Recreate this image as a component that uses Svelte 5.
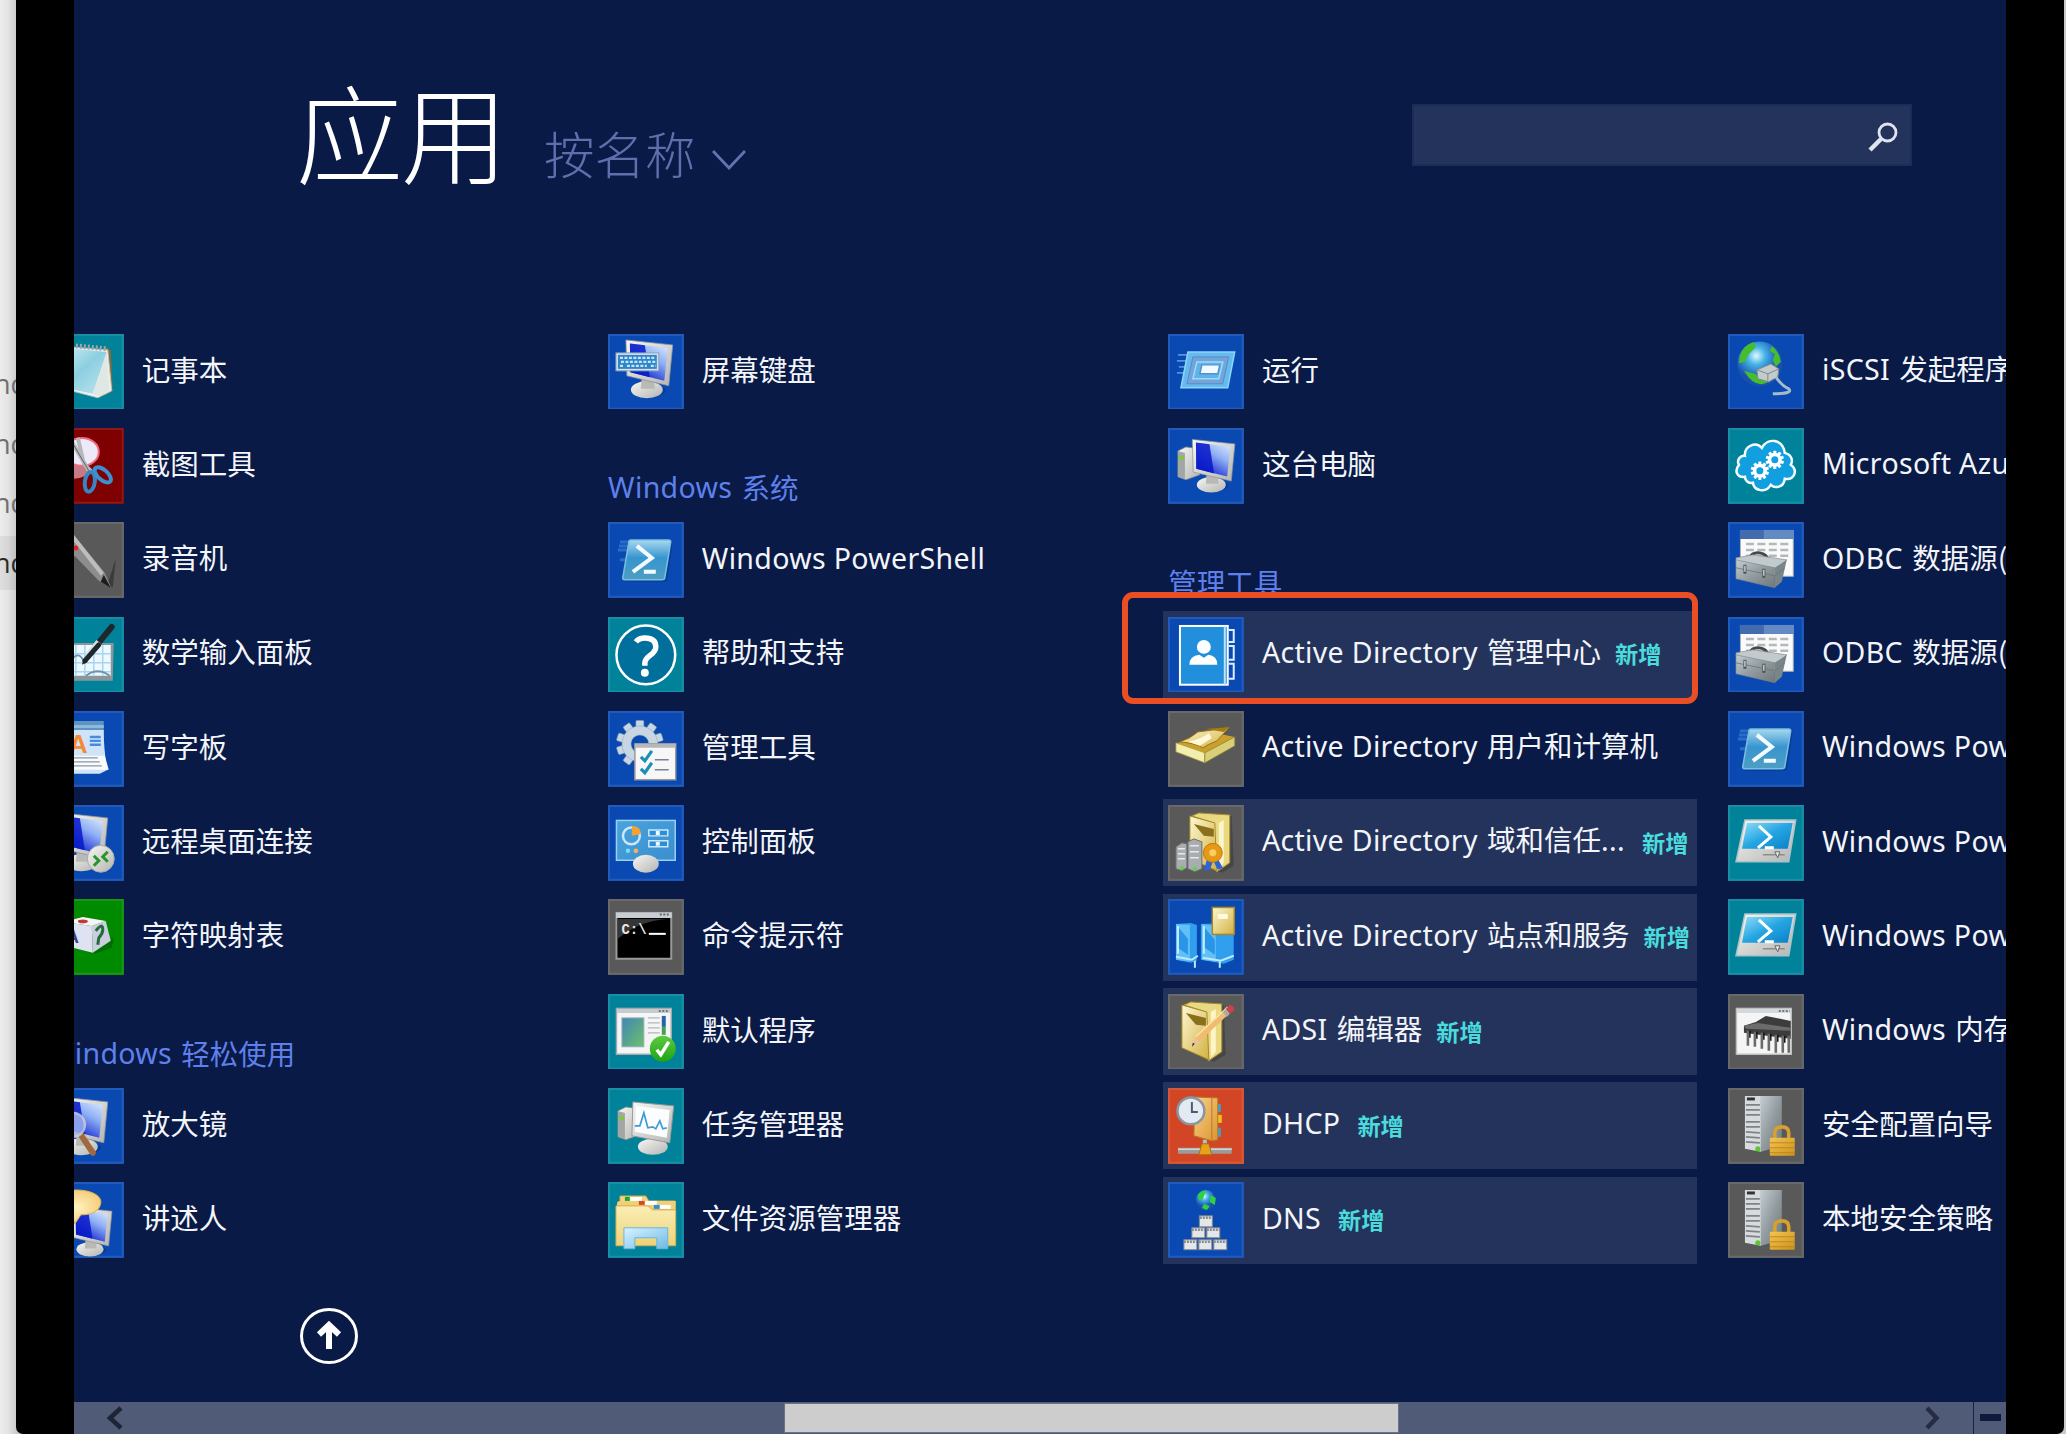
<script>
  const columns = [
    [
      { icon: 'notepad', bg: 'teal', name: '记事本' },
      { icon: 'snip', bg: 'red', name: '截图工具' },
      { icon: 'recorder', bg: 'gray', name: '录音机' },
      { icon: 'math', bg: 'teal', name: '数学输入面板' },
      { icon: 'wordpad', bg: 'blue', name: '写字板' },
      { icon: 'remote', bg: 'blue', name: '远程桌面连接' },
      { icon: 'charmap', bg: 'green', name: '字符映射表' },
      { heading: '轻松使用', latin: 'Windows' },
      { icon: 'magnifier', bg: 'blue', name: '放大镜' },
      { icon: 'narrator', bg: 'blue', name: '讲述人' }
    ],
    [
      { icon: 'osk', bg: 'blue', name: '屏幕键盘' },
      { heading: '系统', latin: 'Windows' },
      { icon: 'powershell', bg: 'blue', latin: 'Windows PowerShell' },
      { icon: 'help', bg: 'teal', name: '帮助和支持' },
      { icon: 'tools', bg: 'blue', name: '管理工具' },
      { icon: 'control', bg: 'blue', name: '控制面板' },
      { icon: 'cmd', bg: 'gray', name: '命令提示符' },
      { icon: 'defaults', bg: 'teal', name: '默认程序' },
      { icon: 'taskmgr', bg: 'teal', name: '任务管理器' },
      { icon: 'explorer', bg: 'teal', name: '文件资源管理器' }
    ],
    [
      { icon: 'run', bg: 'blue', name: '运行' },
      { icon: 'computer', bg: 'blue', name: '这台电脑' },
      { heading: '管理工具' },
      { icon: 'adcenter', bg: 'blue', latin: 'Active Directory', name: '管理中心', fresh: true },
      { icon: 'adusers', bg: 'gray', latin: 'Active Directory', name: '用户和计算机' },
      { icon: 'addomains', bg: 'gray', latin: 'Active Directory', name: '域和信任', more: true, fresh: true },
      { icon: 'adsites', bg: 'blue', latin: 'Active Directory', name: '站点和服务', fresh: true },
      { icon: 'adsi', bg: 'gray', latin: 'ADSI', name: '编辑器', fresh: true },
      { icon: 'dhcp', bg: 'orange', latin: 'DHCP', fresh: true },
      { icon: 'dns', bg: 'blue', latin: 'DNS', fresh: true }
    ],
    [
      { icon: 'iscsi', bg: 'blue', latin: 'iSCSI', name: '发起程序' },
      { icon: 'azure', bg: 'teal', latin: 'Microsoft Azure' },
      { icon: 'odbc', bg: 'blue', latin: 'ODBC', name: '数据源(' },
      { icon: 'odbc', bg: 'blue', latin: 'ODBC', name: '数据源(' },
      { icon: 'powershell', bg: 'blue', latin: 'Windows PowerShell' },
      { icon: 'ise', bg: 'teal', latin: 'Windows PowerShell' },
      { icon: 'ise', bg: 'teal', latin: 'Windows PowerShell' },
      { icon: 'memory', bg: 'gray', latin: 'Windows', name: '内存诊断' },
      { icon: 'security', bg: 'gray', name: '安全配置向导' },
      { icon: 'security', bg: 'gray', name: '本地安全策略' }
    ]
  ];
  const sideRows = [false, false, false, true];
  const teeth = [0, 36, 72, 108, 144, 180, 216, 252, 288, 324];
</script>

{#snippet monitor()}
  <ellipse cx="41" cy="57" rx="17" ry="6" fill="#04255e" opacity=".35" />
  <ellipse cx="39" cy="56" rx="16" ry="8.5" fill="url(#silver)" />
  <path d="M34 42l12 3 1 10H33z" fill="#b9b9b5" />
  <path d="M18 6L65 11 61 52 19 42z" fill="url(#silver)" stroke="#8f9499" stroke-width=".8" />
  <path d="M22 9.500L60 14 56.500 47 22.500 38.500z" fill="url(#screen)" />
  <path d="M22 9.500L37 11.300 42 43.500 22.500 38.500z" fill="#0717c9" opacity=".85" />
{/snippet}

{#snippet tower()}
  <path d="M10 23l8-4 14 2v26l-14 5-8-3z" fill="url(#silver)" stroke="#85898d" stroke-width=".8" />
  <path d="M10 23l7 2v26l-7-2z" fill="#a3a6a4" />
  <path d="M11 28l5 1v3l-5-1z" fill="#73d51c" />
{/snippet}

{#snippet book()}
  <path d="M14 13l8-5 34 3 2 50-12 7-28-13z" fill="#111" opacity=".25" />
  <path d="M16 11l7-3 31 2v48l-13 9-3-4V18z" fill="#e9d982" stroke="#a88c2e" stroke-width="1" />
  <path d="M43 18l5-3v43l-5 6z" fill="#fbf5c8" />
  <path d="M14 11l25 7 2 48-27-12z" fill="url(#gold)" stroke="#a88a24" stroke-width="1" />
  <path d="M18 19l20 5v8l-10-1z" fill="#8a6f1c" />
{/snippet}

{#snippet gear(x, y, k)}
  <g transform="translate({x} {y}) scale({k})">
    {#each teeth as angle}
      <rect x="-3.500" y="-21" width="7" height="9" rx="1" transform="rotate({angle})" />
    {/each}
    <path fill-rule="evenodd" d="M-16 0a16 16 0 1 0 32 0a16 16 0 1 0-32 0zm8 0a8 8 0 1 1 16 0a8 8 0 1 1-16 0z" />
  </g>
{/snippet}

{#snippet glyph(kind)}
  {#if kind === 'notepad'}
    <path d="M57 13l6 3 2 41-8 5z" fill="#8a6a31" />
    <path d="M10 12l50 4 4 41-14 7-38-10z" fill="#f0f4f2" stroke="#b4c2c2" />
    <path d="M8 13l51 5-14 42L8 52z" fill="url(#ice)" />
    <path d="M45 60l14-42 3 39-12 6z" fill="#dfe8e5" />
    <path d="M28 12l32 3" stroke="#9ba6a8" stroke-width="5" stroke-dasharray="2 2" />
  {:else if kind === 'snip'}
    <ellipse cx="25" cy="42" rx="16" ry="9" fill="#d79aa5" opacity=".8" />
    <ellipse cx="34" cy="24" rx="17" ry="14" fill="#eceaf8" stroke="#f46a80" stroke-width="2" />
    <path d="M24 14l17 29M30 10l6 26 8 8" stroke="#b5b7ba" stroke-width="4" fill="none" />
    <path d="M24 14l17 29" stroke="#5f6468" stroke-width="1" fill="none" />
    <ellipse cx="42" cy="54" rx="5" ry="10" fill="none" stroke="#3587c4" stroke-width="4" transform="rotate(8 42 54)" />
    <ellipse cx="55" cy="47" rx="5" ry="10" fill="none" stroke="#3b91d0" stroke-width="4" transform="rotate(-48 55 47)" />
  {:else if kind === 'recorder'}
    <path d="M68 37l-3 29-5-4z" fill="#3b3b3b" />
    <path d="M18 14l7-2 32 39 6 14-12-6-32-33z" fill="#8d8d8d" />
    <path d="M21 13l5 0 30 38-3 3z" fill="#bdbdbd" />
    <path d="M56 53l7 13-10-6z" fill="#1d1d1d" />
    <circle cx="28" cy="26" r="2.500" fill="#e52121" />
  {:else if kind === 'math'}
    <path d="M6 26h60l-1 38H6z" fill="#8a969b" />
    <path d="M6 28h57v31H6z" fill="#eef9ff" />
    <path d="M6 37h57M6 46h57M6 55h57M28 28v31M37 28v31M46 28v31M55 28v31" stroke="#a6d6f2" stroke-width="1.500" />
    <path d="M24 42q8-8 12 3M38 59q12-9 24 0" fill="none" stroke="#6f93a8" stroke-width="1.800" />
    <path d="M64 10L50 27" stroke="#1e282c" stroke-width="6" stroke-linecap="round" />
    <path d="M51 25L40 39" stroke="#d9dfe1" stroke-width="6" />
    <path d="M51 28L37 44" stroke="#1e282c" stroke-width="5" stroke-linecap="round" />
    <path d="M36 42l4 3-6 3z" fill="#222" />
  {:else if kind === 'wordpad'}
    <path d="M6 10h50v10H6z" fill="#5c94c4" />
    <path d="M6 14h50v3H6z" fill="#8fb9da" />
    <path d="M6 19h50q0 24 4 40l-8 4H6z" fill="#cfe4f7" />
    <path d="M6 45h51l4 14H6z" fill="#f8fafc" />
    <text x="21" y="42" font-size="26" font-weight="700" fill="#f58a33">A</text>
    <path d="M42 26h11M42 30h11M42 34h11" stroke="#4a8ade" stroke-width="2.500" />
    <path d="M26 47h24M26 51h26M26 55h28" stroke="#8a95a3" stroke-width="1.300" />
  {:else if kind === 'remote'}
    <g transform="translate(-5 2)">{@render monitor()}</g>
    <circle cx="53" cy="54" r="13.500" fill="url(#silver)" stroke="#a9a9a5" />
    <path d="M46 51l5 5-5 5M60 47l-5 5 5 5" fill="none" stroke="#26962a" stroke-width="3" />
  {:else if kind === 'charmap'}
    <path d="M45 53l17-12 4-2-2 10-17 6z" fill="#044f04" opacity=".5" />
    <path d="M15 23l20-5 23 4-14 5z" fill="#f6f6f8" />
    <path d="M15 23l29 4 1 27-27-7z" fill="#dfe2f0" />
    <path d="M44 27l14-5 5 20-18 12z" fill="#c9cfdf" />
    <ellipse cx="35" cy="22.500" rx="5" ry="1.800" fill="#c83737" />
    <text x="18" y="44" font-size="18" font-weight="700" fill="#39408f">A</text>
    <path d="M48 32q7-9 7-1 0 4-4 8l-1 7" stroke="#246b3c" stroke-width="3" fill="none" />
  {:else if kind === 'magnifier'}
    <g transform="translate(-5 3)">{@render monitor()}</g>
    <path d="M33 47l12 18" stroke="#a06a3d" stroke-width="6" stroke-linecap="round" />
    <circle cx="25" cy="37" r="12" fill="#9fb6f2" opacity=".85" stroke="#c9d0dd" stroke-width="2.500" />
  {:else if kind === 'narrator'}
    <g transform="translate(9 20) scale(.85)">{@render monitor()}</g>
    <path d="M4 20c0-8 10-12 24-12s26 5 25 13-9 12-20 12l-6 9-3-9C12 33 4 28 4 20z" fill="url(#bubble)" stroke="#d8b25c" />
  {:else if kind === 'osk'}
    {@render monitor()}
    <rect x="8" y="19" width="43" height="18" fill="#d3e2ee" stroke="#8ba2b6" />
    <rect x="10" y="21" width="39" height="14" fill="#2e85c8" />
    <path d="M12 24h36M13 28h35M12 32h4M19 32h20M43 32h5" stroke="#c6e3f7" stroke-width="2.200" stroke-dasharray="3 1.500" />
  {:else if kind === 'powershell'}
    <path d="M12 20h12M11 24h12M10 28h10M12 38h6" stroke="#3f86d6" stroke-width="3" opacity=".6" />
    <path d="M25 21h40l-6 39H17z" fill="#06286c" opacity=".35" />
    <path d="M23 18h38q2 0 2 2l-6 36q0 2-3 2H17q-3 0-2-3l6-35q0-2 2-2z" fill="url(#shell)" stroke="#79bfe0" stroke-width="1.500" />
    <path d="M29 24l15 12-19 14M36 50h12" stroke="#f3fbff" stroke-width="4" fill="none" />
  {:else if kind === 'help'}
    <circle cx="38" cy="38" r="29.500" fill="#006f9b" stroke="#fff" stroke-width="2.500" />
    <path d="M28 25q3-4 9-4c7 0 11 3 11 9 0 8-11 9-11 16v3" fill="none" stroke="#fff" stroke-width="5.500" />
    <circle cx="37" cy="56" r="4" fill="#fff" />
  {:else if kind === 'tools'}
    <g fill="#c8d6e3" stroke="#8fa5b8" stroke-width=".5">{@render gear(32, 33, 1.12)}</g>
    <rect x="27" y="33" width="41" height="36" fill="#f7f7f7" stroke="#9a9a9a" stroke-width="1.500" />
    <path d="M27 33h41v4H27z" fill="#b5b7b9" />
    <path d="M33 46l4 4 7-10M33 58l4 4 7-10" fill="none" stroke="#1d8fb5" stroke-width="3.200" />
    <path d="M47 49h14M47 59h14" stroke="#7c7f98" stroke-width="1.600" />
  {:else if kind === 'control'}
    <rect x="8.500" y="15.500" width="59" height="40" fill="url(#panel)" stroke="#9ad0f2" stroke-width="1.500" />
    <circle cx="23.500" cy="31" r="8.500" fill="none" stroke="#c9e8fa" stroke-width="2.500" />
    <path d="M24 31V21q9 0 9 8z" fill="#f5a330" />
    <path d="M41 25h19v6H41zM41 36h19v6H41z" fill="#2d8dd6" stroke="#cbe9fb" stroke-width="1.500" />
    <path d="M48 26h4v4h-4zM48 37h4v4h-4z" fill="#eaf8ff" />
    <circle cx="20" cy="46" r="2.200" fill="#6de0fb" />
    <circle cx="28" cy="46" r="2.400" fill="#f2b25f" />
    <ellipse cx="38" cy="59" rx="13" ry="9" fill="url(#silver)" />
  {:else if kind === 'cmd'}
    <rect x="8.500" y="14" width="55" height="46" fill="#000" stroke="#9a9a9a" stroke-width="2" />
    <path d="M8 13.500h56V19H8z" fill="#c9cdd2" />
    <path d="M10 20h50Q30 22 10 40z" fill="#5a5a5a" opacity=".6" />
    <path d="M52 15.500h10" stroke="#667" stroke-width="2" stroke-dasharray="2 1.500" />
    <text x="13.500" y="35.500" font-size="14" font-weight="700" fill="#e8e8e8" class="mono">C:\</text>
    <path d="M41 35h17" stroke="#fff" stroke-width="2" />
  {:else if kind === 'defaults'}
    <rect x="8.500" y="14.500" width="55" height="46" fill="#f4f6f6" stroke="#a3aaad" stroke-width="1.500" />
    <path d="M9 15h54v4H9z" fill="#c6cccf" />
    <path d="M51 17h10" stroke="#6b7a86" stroke-width="2" stroke-dasharray="2 1.500" />
    <rect x="14" y="24" width="22" height="29" fill="url(#photo)" stroke="#9ab" />
    <path d="M40 24h12M40 29h12M40 34h12M40 39h12" stroke="#b2b5b8" stroke-width="1.300" />
    <path d="M54 22h4v11h-4z" fill="#2b62ad" />
    <path d="M54 33h4v8h-4z" fill="#48a04a" />
    <circle cx="55" cy="55" r="13" fill="url(#ok)" />
    <path d="M49 56l4 5 8-13" fill="none" stroke="#fff" stroke-width="3.500" />
  {:else if kind === 'taskmgr'}
    {@render tower()}
    <ellipse cx="45" cy="59" rx="15" ry="8" fill="url(#silver)" />
    <path d="M25 14l41 4-4 37-38-7z" fill="url(#silver)" stroke="#999" />
    <path d="M28 18l34 4-3 28-32-6z" fill="#fbfdff" />
    <path d="M27 38l5 0 4-13 4 15 5-1 3 2 4-8 3 8 4-1" fill="none" stroke="#3f9bd0" stroke-width="1.700" />
  {:else if kind === 'explorer'}
    <path d="M12 14h26l3 5h26v14H12z" fill="#f2d583" stroke="#cda349" />
    <path d="M9 22q0-3 3-3h56v42H9z" fill="#f0cf76" />
    <path d="M8 24h32l5 4h23v36H8z" fill="url(#folder)" stroke="#d3ab4f" />
    <path d="M17 15h5v4h-5z" fill="#18a92b" />
    <path d="M22 15h12v4H22z" fill="#fff" />
    <path d="M31 19h6v4h-6z" fill="#d04b24" />
    <path d="M37 19h12v4H37z" fill="#fff" />
    <path d="M46 23h6v4h-6z" fill="#2793dd" />
    <path d="M52 23h11v4H52z" fill="#fff" />
    <path d="M16 46h44v21H49V56H27v11H16z" fill="url(#glass)" stroke="#69b4de" />
  {:else if kind === 'run'}
    <path d="M10 21h14M9 27h12M11 33h10M9 39h8" stroke="#73b4f1" stroke-width="1.600" opacity=".7" />
    <path d="M20 18h47l-7 36H13z" fill="#65bbee" stroke="#8ed5f8" stroke-width="1.500" />
    <path d="M25 23h36l-6 27H19z" fill="#75a4db" stroke="#548cca" />
    <path d="M29 28h26l-4 17H25z" fill="#5fb3ea" stroke="#9ddcf8" stroke-width="1.500" />
    <path d="M34 31h18l-2 9H32z" fill="#f2faff" stroke="#4e91d4" stroke-width="1.500" />
  {:else if kind === 'computer'}
    {@render tower()}
    <g transform="translate(8 6) scale(.91)">{@render monitor()}</g>
  {:else if kind === 'adcenter'}
    <path d="M61 13h5v12h-5M61 29h5v14h-5M61 47h5v15h-5" fill="none" stroke="#d7efff" stroke-width="2" />
    <rect x="12" y="9" width="48" height="59" fill="#218fdb" stroke="#fff" stroke-width="2" />
    <path d="M57 9v59" stroke="#bfe3f9" stroke-width="2" />
    <circle cx="36" cy="30" r="7" fill="#fff" />
    <path d="M21.500 48q0-9 10-10l4.500 3 4.500-3q9 1 9 10z" fill="#fff" />
  {:else if kind === 'adusers'}
    <path d="M8 33l30-13 29 6-29 17z" fill="#c8a02b" />
    <path d="M8 32l29 10v10L8 41z" fill="#f3eeae" stroke="#aa9c43" stroke-width=".8" />
    <path d="M37 42l30-16v9L37 52z" fill="#d9cf78" stroke="#958631" stroke-width=".8" />
    <path d="M12 31q10-3 18-10l31-4-12 13q-10 4-14 7-8-5-23-6z" fill="url(#gold)" stroke="#98720f" />
    <path d="M20 31q16-4 21-9l3 5-12 8z" fill="#fff9d6" />
    <path d="M38 18l24-2-6 5z" fill="#a47b10" />
  {:else if kind === 'addomains'}
    <g transform="translate(8 0)">{@render book()}</g>
    <path d="M8 42l6-4 5 1v24l-5 3-6-2zM20 37l6-3 8 3v27l-7 3-7-3z" fill="#a9adb0" stroke="#6a6d6f" />
    <path d="M10 44h7M10 49h7M10 54h7M22 41h9M22 47h9M22 53h9" stroke="#e8eaea" stroke-width="1.500" />
    <circle cx="14" cy="63" r="1.800" fill="#4bdc2d" />
    <circle cx="27" cy="64" r="1.800" fill="#4bdc2d" />
    <path d="M39 55l-3 11 6-1 3-8zM50 54l5 9-5 2-4-8z" fill="#2a63dc" />
    <circle cx="45" cy="48" r="9.500" fill="#e59a17" stroke="#bd7a0c" />
    <circle cx="45" cy="48" r="3.500" fill="#f9cf63" />
  {:else if kind === 'adsites'}
    <path d="M8 25l15-1 6 2v36l-6 2-15-3zM33 25l25-1 8 4v33l-10 4-23-4z" fill="#2f9fee" />
    <path d="M8 25l14 1v37l-14-2zM34 25l14 2v36l-14-2z" fill="#62c0f8" />
    <path d="M11 29l9 11v16l-9-6zM37 29l10 12v15l-10-7z" fill="#2a95e8" />
    <path d="M8 58l16 3 6-4M35 59l18 3 13-5M27 62v7M52 63v6" stroke="#bdeafe" stroke-width="2" fill="none" />
    <path d="M10 27v28M36 27v28" stroke="#c4ecff" stroke-width="2" />
    <rect x="44.500" y="8.500" width="22" height="27" fill="url(#gold)" stroke="#a98725" stroke-width="1.500" />
    <path d="M50 15h10v5H50z" fill="#fffbe0" />
  {:else if kind === 'adsi'}
    {@render book()}
    <path d="M62 15L29 46" stroke="#f1bb72" stroke-width="6" />
    <path d="M60 13L28 43" stroke="#ffe0a5" stroke-width="1.500" />
    <path d="M26 43l6 6-8 4z" fill="#e9c59b" />
    <path d="M24 53l3-3-2-1z" fill="#333" />
    <path d="M58 15l4-4q6 1 4 6l-4 3z" fill="#c9414c" />
    <path d="M55 18l3-3 4 5-3 3z" fill="#9fb0a6" />
  {:else if kind === 'dhcp'}
    <path d="M50 16h3v8h-3zM50 40h3v9h-3z" fill="#37a3d8" />
    <path d="M50 27h4v8h-4z" fill="#efc31e" />
    <path d="M27 9l23 1v42l-6 1-18-5z" fill="url(#amber)" stroke="#b27a22" />
    <path d="M44 10v43" stroke="#b37b2a" />
    <path d="M37 52v6" stroke="#b9bdbf" stroke-width="4" />
    <path d="M10 63h54" stroke="#9b9b9b" stroke-width="6" />
    <path d="M10 61.500h54" stroke="#d5d5d5" stroke-width="1.500" />
    <path d="M34 56h7l3 11H31z" fill="#e6a31a" stroke="#a8720d" />
    <circle cx="23" cy="23" r="13.500" fill="#e3eaf2" stroke="#8a96a1" stroke-width="2.500" />
    <path d="M24 14v10h6" fill="none" stroke="#4c5c70" stroke-width="2" />
  {:else if kind === 'dns'}
    <circle cx="38" cy="18" r="10" fill="url(#globe)" />
    <path d="M30 13q5-5 8-4l-3 8-4 1zM43 13l5 3-1 7-5-3zM36 22l6 2-3 4-5-2z" fill="#2fd23a" />
    <g fill="#e4e7e9" stroke="#85898d">
      <rect x="31.500" y="34" width="13" height="11" />
      <rect x="24" y="46" width="13" height="10" /><rect x="39" y="46" width="13" height="10" />
      <rect x="16" y="58" width="13" height="10" /><rect x="31" y="58" width="13" height="10" /><rect x="46" y="58" width="13" height="10" />
    </g>
    <path d="M32 36h12M24 48h13M39 48h13M16 60h13M31 60h13M46 60h13" stroke="#888d92" stroke-width="2.500" stroke-dasharray="2 1" />
  {:else if kind === 'iscsi'}
    <circle cx="32" cy="30" r="22.500" fill="url(#globe)" />
    <path d="M12 22q3-11 14-14l2 5-7 7-4 8-6 1zM44 12q8 6 9 16l-5 5-3-7 2-6-5-3zM16 37l11 3 6 5 8 3q-14 8-25-11z" fill="#45bd2c" />
    <path d="M29 36l14-6 8 5-1 8-9 5-11-3z" fill="#c3cbcd" stroke="#7e898d" />
    <path d="M29 36l11 4 11-5M40 40v7" stroke="#7e898d" fill="none" />
    <path d="M48 43q6 9 13 12 5 5-16 5" fill="none" stroke="#a4bcc9" stroke-width="3" />
  {:else if kind === 'azure'}
    <path d="M17 49C9 50 6 43 11 37 8 32 13 27 17 28 16 18 28 13 34 20 40 9 55 11 57 25 65 27 65 34 63 37 71 43 66 53 57 51 56 60 47 61 43 57 38 66 26 63 25 55 21 56 17 53 17 49z" fill="#129fe0" stroke="#f4fcff" stroke-width="2.500" />
    <g fill="#fff">{@render gear(32, 43, 0.44)}{@render gear(47, 32, 0.44)}</g>
  {:else if kind === 'odbc'}
    <rect x="12.500" y="8.500" width="53" height="46" fill="#fafafa" stroke="#abafb3" />
    <path d="M12 8h54v9H12z" fill="#426cae" />
    <path d="M36 8h30v9H36z" fill="#7b9fd0" opacity=".6" />
    <path d="M18 22h43M18 28h43M18 34h43" stroke="#b5b8bb" stroke-width="2.500" stroke-dasharray="8 3.500" />
    <path d="M22 36q2-6 10-5 7 1 9 8" fill="none" stroke="#45484a" stroke-width="3" />
    <path d="M8 36l17-3 34 5-10 9-41-8z" fill="#c3cacd" stroke="#7a8487" stroke-width=".6" />
    <path d="M8 38l39 8 0 20-39-9z" fill="url(#steel)" stroke="#7a8487" stroke-width=".6" />
    <path d="M47 46l12-8-5 22-7 6z" fill="#78868a" />
    <path d="M8 46l39 8 10-8" fill="none" stroke="#6a7579" stroke-width=".8" />
    <path d="M17 43v9M36 47v9" stroke="#4a5356" stroke-width="3" />
    <path d="M17 44v6M36 48v6" stroke="#e6eaec" stroke-width="1.200" />
  {:else if kind === 'ise'}
    <path d="M17 15h51l-7 42H8z" fill="url(#silver)" stroke="#a7c3c9" stroke-width="1.500" />
    <path d="M19 18h46l-5 26H14z" fill="url(#sky)" />
    <path d="M31 21l12 11-13 11M37 43h9" fill="none" stroke="#fff" stroke-width="3" />
    <path d="M35 50h22" stroke="#7d8588" stroke-width="1.300" />
    <path d="M47 47l5 0-2 6z" fill="#eee" stroke="#666" />
  {:else if kind === 'memory'}
    <rect x="8.500" y="14.500" width="55" height="46" fill="#f5f5f5" stroke="#bfbfbf" stroke-width="1.500" />
    <path d="M9 15h54v4H9z" fill="#d4d8dc" />
    <path d="M51 17h11" stroke="#6c7890" stroke-width="2" stroke-dasharray="2 1.500" />
    <path d="M16 32l12-4 10-6 25 5v18l-47-6z" fill="#3c3c3c" />
    <path d="M16 32l14-3 33 5v3L18 35z" fill="#6c6c6c" />
    <path d="M20 37v15M27 38v15M34 39v16M41 40v17M48 41v18M55 42v17M61 42v17" stroke="#6b6b6b" stroke-width="2.600" />
    <path d="M22 37v7M29 38v7M36 39v7M43 40v7M50 41v7M57 42v7" stroke="#111" stroke-width="1.500" />
  {:else if kind === 'security'}
    <path d="M33 8h21v50l-21 6z" fill="url(#steel)" />
    <path d="M17 8h16v56l-16-3z" fill="#d7dbdd" />
    <path d="M19 11h8" stroke="#333" stroke-width="3" />
    <path d="M18 17h14M18 22h14M18 27h14M18 34h14M18 39h14M18 44l14 1M18 49l14 1M18 54l14 1" stroke="#7d8386" stroke-width="1.800" />
    <circle cx="30" cy="61" r="2.600" fill="#56c92b" />
    <path d="M47 51v-6q0-6 7-6t7 6v6" fill="none" stroke="#d8a02c" stroke-width="3.600" />
    <rect x="42" y="50" width="25" height="18" rx="1" fill="url(#brass)" />
    <path d="M42 55h25M42 60h25M42 65h25" stroke="#b97e12" stroke-width=".8" />
  {/if}
{/snippet}

<svg class="defs" aria-hidden="true">
  <defs>
    <linearGradient id="silver" x2="1" y2="1"><stop stop-color="#f7f7f4" /><stop offset="1" stop-color="#b4b5b2" /></linearGradient>
    <linearGradient id="screen" x1="1" y1="0" x2=".4" y2="1"><stop stop-color="#e4eeff" /><stop offset=".45" stop-color="#8fb0f5" /><stop offset="1" stop-color="#0d1fcf" /></linearGradient>
    <linearGradient id="ice" x2="1" y2="1"><stop stop-color="#d7f3f7" /><stop offset=".5" stop-color="#8ccfe0" /><stop offset="1" stop-color="#bfe6ee" /></linearGradient>
    <linearGradient id="glass" x2="1" y2="1"><stop stop-color="#d8f3ff" /><stop offset="1" stop-color="#6fb9e4" /></linearGradient>
    <linearGradient id="shell" x2="0" y2="1"><stop stop-color="#a9d9ef" /><stop offset=".45" stop-color="#3795cf" /><stop offset="1" stop-color="#4e9ec2" /></linearGradient>
    <linearGradient id="sky" x2="1" y2="1"><stop stop-color="#8fdcf8" /><stop offset=".5" stop-color="#24a5e2" /><stop offset="1" stop-color="#0a7fc6" /></linearGradient>
    <linearGradient id="panel" x2="1" y2="1"><stop stop-color="#4aa3dc" /><stop offset="1" stop-color="#3a8fce" /></linearGradient>
    <linearGradient id="photo" x2="1" y2="1"><stop stop-color="#3f86b5" /><stop offset="1" stop-color="#6fc06a" /></linearGradient>
    <linearGradient id="ok" x2="0" y2="1"><stop stop-color="#5ecb42" /><stop offset="1" stop-color="#1ea414" /></linearGradient>
    <linearGradient id="folder" x2="0" y2="1"><stop stop-color="#fbeeb5" /><stop offset="1" stop-color="#ecd37a" /></linearGradient>
    <linearGradient id="gold" x2="1" y2="1"><stop stop-color="#fdf8d2" /><stop offset="1" stop-color="#d2b143" /></linearGradient>
    <linearGradient id="amber" x2="1" y2="1"><stop stop-color="#f7cf8a" /><stop offset="1" stop-color="#dd9630" /></linearGradient>
    <linearGradient id="brass" x2="1" y2="1"><stop stop-color="#f3c451" /><stop offset="1" stop-color="#cd9220" /></linearGradient>
    <linearGradient id="steel" x2="1" y2="1"><stop stop-color="#c3ccd0" /><stop offset=".5" stop-color="#929b9f" /><stop offset="1" stop-color="#6f7779" /></linearGradient>
    <radialGradient id="bubble"><stop stop-color="#fff3c2" /><stop offset="1" stop-color="#f5cf7b" /></radialGradient>
    <radialGradient id="globe" cx=".42" cy=".32"><stop stop-color="#e0fbff" /><stop offset=".4" stop-color="#45b3e6" /><stop offset="1" stop-color="#1a4fae" /></radialGradient>
  </defs>
</svg>

<div class="desk">
  <aside class="side">
    {#each sideRows as active}
      <div class="side-row" class:active>nd</div>
    {/each}
  </aside>
  <div class="window">
    <main class="screen">
      <header>
        <h1>应用</h1>
        <div class="sort">
          <span>按名称</span>
          <svg width="34" height="20" viewBox="0 0 34 20"><path d="M1 1l16 17L33 1" fill="none" stroke="#6573b2" stroke-width="2.800" /></svg>
        </div>
        <div class="search">
          <svg width="32" height="32" viewBox="0 0 32 32" fill="none" stroke="#dfe4ee">
            <circle cx="20.500" cy="11.500" r="8.500" stroke-width="2.800" />
            <path d="M14 18L3 29" stroke-width="4.500" />
          </svg>
        </div>
      </header>

      <section class="apps">
        {#each columns as column}
          <div class="column">
            {#each column as app}
              {#if app.heading}
                <h2>{#if app.latin}<span class="latin lead">{app.latin}&nbsp;</span>{/if}{app.heading}</h2>
              {:else}
                <div class="slot">
                  <div class="app" class:fresh={app.fresh}>
                    <svg class="icon {app.bg}" viewBox="0 0 76 76">
                      {@render glyph(app.icon)}
                      <rect x="1" y="1" width="74" height="74" fill="none" stroke="#fff" stroke-opacity=".1" stroke-width="2" />
                    </svg>
                    <span class="name">{#if app.latin}<span class="latin" class:lead={app.name}>{app.latin}{#if app.name}&nbsp;{/if}</span>{/if}{app.name ?? ''}{#if app.more}<span class="latin">...</span>{/if}</span>
                    {#if app.fresh}<span class="badge" class:wide={app.more || !app.name}>新增</span>{/if}
                  </div>
                </div>
              {/if}
            {/each}
          </div>
        {/each}
      </section>

      <footer>
        <svg width="60" height="60" viewBox="0 0 60 60" fill="none" stroke="#fff">
          <ellipse cx="30" cy="30" rx="27.500" ry="26.500" stroke-width="3" />
          <path d="M30 43V20M20 28.500L30 19 40 28.500" stroke-width="6" />
        </svg>
      </footer>

      <div class="scrollbar">
        <svg class="prev" width="18" height="26" viewBox="0 0 18 26"><path d="M16 3L5 13l11 10" fill="none" stroke="#1d2436" stroke-width="4.500" /></svg>
        <div class="thumb"></div>
        <svg class="next" width="18" height="26" viewBox="0 0 18 26"><path d="M3 3l9.500 10L3 23" fill="none" stroke="#252d42" stroke-width="4.500" /></svg>
        <div class="minus"><i></i></div>
      </div>

      <div class="marker"></div>
    </main>
  </div>
</div>

<style>
  :global(body) { margin: 0; background: #e6e6e6; }
  .defs { position: absolute; width: 0; height: 0; }
  .desk {
    display: flex;
    width: 2066px;
    height: 1434px;
    overflow: hidden;
    background: #c9c9c9;
    font-family: "Noto Sans CJK SC", "Noto Sans", sans-serif;
  }
  .side {
    width: 16px;
    box-sizing: border-box;
    padding-top: 357px;
    overflow: hidden;
    background: linear-gradient(90deg, #ececec, #e4e4e4 50%, #cdcdcd);
  }
  .side-row {
    height: 54px;
    margin-bottom: 5.700px;
    line-height: 54px;
    font-family: "Open Sans", sans-serif;
    font-size: 27px;
    color: #707070;
    text-indent: -6px;
    white-space: nowrap;
  }
  .side-row.active { background: rgba(0, 0, 0, .06); color: #2a2a2a; }
  .window {
    width: 1932px;
    padding: 0 58px;
    background: #000;
    border-bottom-left-radius: 7px;
    border-bottom-right-radius: 7px;
  }
  .screen {
    position: relative;
    display: flex;
    flex-direction: column;
    height: 1434px;
    overflow: hidden;
    background: #081a45;
    color: #f3f5fa;
  }
  header {
    display: flex;
    align-items: flex-start;
    flex: none;
    height: 333.700px;
    padding: 0 94px 0 222px;
    box-sizing: border-box;
  }
  h1 {
    margin: 76px 0 0;
    width: 248px;
    font-size: 107px;
    line-height: 108px;
    font-weight: 300;
    letter-spacing: -2px;
    color: #fff;
  }
  .sort {
    display: flex;
    align-items: center;
    gap: 16px;
    margin-top: 124px;
    font-size: 50.500px;
    line-height: 56px;
    font-weight: 300;
    color: #5f6eac;
  }
  .sort svg { margin-top: 15px; }
  .search {
    display: flex;
    align-items: center;
    justify-content: flex-end;
    width: 500px;
    height: 62px;
    margin: 104px 0 0 auto;
    padding: 3px 11px 0 0;
    box-sizing: border-box;
    border: 2px solid #1d2c56;
    background: #24335b;
  }
  .apps { display: flex; margin-left: -26px; height: 944.300px; flex: none; }
  .column { flex: none; width: 560.100px; }
  .slot { height: 94.300px; }
  .app {
    display: flex;
    align-items: center;
    height: 75.700px;
    width: 534px;
    white-space: nowrap;
  }
  .app.fresh {
    box-sizing: border-box;
    height: 87px;
    padding: 0 5.700px;
    margin-left: -5.700px;
    position: relative;
    top: -5.700px;
    background: #24335b;
  }
  .icon { flex: none; width: 75.700px; height: 75.700px; }
  .icon text { font-family: "Liberation Sans", sans-serif; }
  .icon text.mono { font-family: "Liberation Mono", monospace; }
  .blue { background: #0a49b2; }
  .teal { background: #00829a; }
  .gray { background: #595959; }
  .red { background: #7f0000; }
  .green { background: #008a00; }
  .orange { background: #d24625; }
  .name { margin-left: 18px; padding-bottom: 6px; font-size: 28.500px; line-height: 40px; }
  .latin { font-family: "Noto Sans", "Open Sans", sans-serif; letter-spacing: .34px; }
  .latin.lead { padding-right: 1.500px; }
  .badge {
    margin-left: 14px;
    padding-bottom: 2px;
    font-size: 23.200px;
    line-height: 32px;
    font-weight: 700;
    color: #4adbdd;
  }
  .badge.wide { margin-left: 17px; }
  h2 {
    display: flex;
    align-items: flex-end;
    height: 94.300px;
    margin: 0;
    padding-bottom: 15px;
    box-sizing: border-box;
    font-size: 28.500px;
    line-height: 40px;
    font-weight: 400;
    color: #5f80ec;
  }
  footer { height: 124px; flex: none; padding: 28px 0 0 225px; box-sizing: border-box; }
  .scrollbar {
    display: flex;
    align-items: center;
    width: 100%;
    height: 32px;
    background: #505b78;
  }
  .prev { margin-left: 31px; }
  .thumb { width: 613px; height: 28px; margin-left: 662px; background: #cdcdcd; outline: 1px solid #6b7284; }
  .next { margin-left: 526px; }
  .minus {
    display: flex;
    align-items: center;
    justify-content: center;
    width: 32px;
    height: 32px;
    margin-left: auto;
    border-left: 1px solid #15224c;
  }
  .minus i { width: 21px; height: 7px; background: #10193c; }
  .marker {
    position: absolute;
    left: 1048px;
    top: 592px;
    width: 576px;
    height: 112px;
    box-sizing: border-box;
    border: 6px solid #ea4e25;
    border-radius: 11px;
  }
</style>
